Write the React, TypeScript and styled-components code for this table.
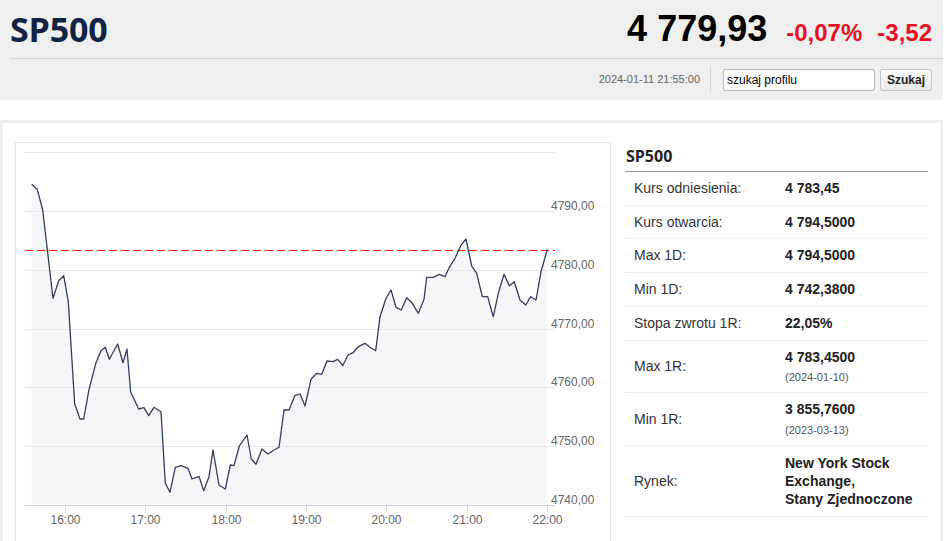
import styled, { createGlobalStyle } from "styled-components";

const GlobalStyle = createGlobalStyle`
  body {
    margin: 0;
    background: #fff;
    font-family: "Liberation Sans", Arial, sans-serif;
  }
`;

// chart points in page pixels (inner chart box starts at 16,143)
const points: [number, number][] = [
    [31.7, 184.3], [37.3, 189.3], [42.7, 210], [53, 298.3], [58.7, 280.7], [63.7, 275.7], [68.3, 301.7],
    [74.7, 404], [80, 419], [83.7, 419], [89, 389.3], [96, 362.7], [101, 350.7], [105.3, 347.3],
    [109.3, 359.3], [117.7, 344], [123, 362.7], [127, 349], [130.7, 392.3], [138.7, 409], [144, 407.7],
    [148.7, 415.7], [154, 407.3], [161, 411.7], [165.3, 483.3], [170, 492.3], [175.3, 467.3], [181, 465.7],
    [188, 468.3], [192, 479], [199, 476.3], [203.7, 490.7], [209, 476.7], [213, 450], [219, 485],
    [225.3, 489], [230.3, 465], [234, 465.7], [239.3, 446], [247, 435], [251.3, 459], [256, 464.3],
    [262, 449], [268, 454], [274, 450], [279, 447.3], [284, 410], [289, 410], [294.7, 395.7], [300, 394],
    [305, 406], [311, 379.3], [316.7, 373.3], [321.7, 374.3], [327, 361], [333, 361.7], [337.7, 359.3],
    [342.7, 365.7], [348, 355], [353, 352.7], [358.3, 346.7], [365, 343.3], [370, 347.3], [375.7, 350.7],
    [380, 316.7], [386, 298.3], [391, 290], [396, 307.3], [401.3, 310], [406.7, 297.7], [412.3, 303.3],
    [418.3, 313.3], [424, 299.3], [426.7, 277.3], [433.3, 277.3], [439.3, 274.3], [445, 276.7],
    [449.3, 267.3], [455, 258.3], [460.7, 245.7], [466, 239], [471.7, 266], [476.7, 273.3], [482.3, 296.7],
    [487.7, 296.7], [493.3, 316.7], [498.3, 293.3], [504, 274.3], [509.3, 285.7], [514.3, 281.7],
    [520, 300], [525.7, 305], [530.7, 296.7], [536, 300], [541, 271.7], [547.3, 249.3],
];

const axisY = 505.5;
// grid rows from 4800 down to 4740, snapped to half pixels for crisp 1px lines
const yLines = [4800, 4790, 4780, 4770, 4760, 4750, 4740].map((v, i) => ({
    v,
    y: Math.round(152.3 + i * 58.78) + 0.5,
}));
const hours = ["16:00", "17:00", "18:00", "19:00", "20:00", "21:00", "22:00"];
const refY = 250.5;

const stats = [
    { label: "Kurs odniesienia:", value: "4 783,45" },
    { label: "Kurs otwarcia:", value: "4 794,5000" },
    { label: "Max 1D:", value: "4 794,5000" },
    { label: "Min 1D:", value: "4 742,3800" },
    { label: "Stopa zwrotu 1R:", value: "22,05%" },
    { label: "Max 1R:", value: "4 783,4500", date: "(2024-01-10)" },
    { label: "Min 1R:", value: "3 855,7600", date: "(2023-03-13)" },
];

function Chart() {
    const line = points.map(([x, y], i) => `${i ? "L" : "M"}${x} ${y}`).join(" ");
    const first = points[0];
    const last = points[points.length - 1];
    const area = `${line} L${last[0]} ${axisY} L${first[0]} ${axisY} Z`;

    return (
        <ChartSvg viewBox="16 143 592 400" width={592} height={400}>
            <path d={area} fill="#f5f6f8" />
            {yLines.map((l) => (
                <g key={l.v}>
                    {l.v !== 4740 && <line x1={25} x2={555} y1={l.y} y2={l.y} stroke="#e6e6e6" />}
                    {l.v !== 4800 && (
                        <AxisText x={551} y={l.y - 1.5}>
                            {l.v},00
                        </AxisText>
                    )}
                </g>
            ))}
            <line x1={25} x2={555} y1={axisY} y2={axisY} stroke="#ccd6eb" />
            {hours.map((h, i) => {
                const x = Math.round(65 + i * 80.33) + 0.5;
                return (
                    <g key={h}>
                        <line x1={x} x2={x} y1={axisY} y2={axisY + 7} stroke="#ccd6eb" />
                        <AxisText x={x} y={524} textAnchor="middle">
                            {h}
                        </AxisText>
                    </g>
                );
            })}
            <line x1={25} x2={555} y1={refY} y2={refY} stroke="#ff1010" strokeDasharray="8 4" />
            <path d={line} fill="none" stroke="#2f3f5c" strokeWidth={1.3} strokeLinejoin="round" />
        </ChartSvg>
    );
}

export default function App() {
    return (
        <Page>
            <GlobalStyle />
            <Header>
                <TopRow>
                    <Title>SP500</Title>
                    <Quote>
                        <Price>4 779,93</Price>
                        <Change>-0,07%</Change>
                        <Change>-3,52</Change>
                    </Quote>
                </TopRow>
                <BottomRow>
                    <DateText>2024-01-11 21:55:00</DateText>
                    <SearchInput defaultValue="szukaj profilu" />
                    <SearchButton>Szukaj</SearchButton>
                </BottomRow>
            </Header>
            <Main>
                <ChartBox>
                    <Chart />
                </ChartBox>
                <Panel>
                    <PanelTitle>SP500</PanelTitle>
                    {stats.map((s) => (
                        <Row key={s.label}>
                            <Label>{s.label}</Label>
                            <Value>
                                {s.value}
                                {s.date && <SubDate>{s.date}</SubDate>}
                            </Value>
                        </Row>
                    ))}
                    <Row>
                        <Label>Rynek:</Label>
                        <Value $tall>
                            New York Stock
                            <br />
                            Exchange,
                            <br />
                            Stany Zjednoczone
                        </Value>
                    </Row>
                </Panel>
            </Main>
        </Page>
    );
}

const Page = styled.div`
width: 943px;
`;

const Header = styled.header`
background: #efefef;
`;

const TopRow = styled.div`
display: flex;
align-items: center;
justify-content: space-between;
height: 59px;
box-sizing: border-box;
margin-left: 10px;
padding-right: 11px;
border-bottom: 1px solid #d4d4d4;
`;

const Title = styled.h1`
margin: 0;
font-family: "Open Sans", sans-serif;
font-weight: 700;
font-size: 34px;
color: #0f2344;
letter-spacing: -0.2px;
`;

const Quote = styled.div`
display: flex;
align-items: baseline;
gap: 15px;
`;

const Price = styled.span`
font-size: 36px;
font-weight: 700;
color: #000;
margin-right: 4px;
`;

const Change = styled.span`
font-size: 24px;
font-weight: 700;
color: #e8101f;
`;

const BottomRow = styled.div`
display: flex;
align-items: center;
justify-content: flex-end;
height: 41px;
padding-right: 11px;
`;

const DateText = styled.span`
font-size: 11px;
color: #666;
line-height: 25px;
padding-right: 10px;
margin-right: 12px;
border-right: 1px solid #d0d0d0;
`;

const SearchInput = styled.input`
width: 152px;
height: 22px;
box-sizing: border-box;
border: 1px solid #b9b9b9;
border-radius: 2px;
padding: 0 3px;
margin: 0 5px 0 0;
font-family: "Liberation Sans", Arial, sans-serif;
font-size: 12px;
color: #000;
background: #fff;
`;

const SearchButton = styled.button`
width: 52px;
height: 22px;
box-sizing: border-box;
border: 1px solid #c6c6c6;
border-radius: 2px;
padding: 0;
background: linear-gradient(#fbfbfb, #e9e9e9);
font-family: "Liberation Sans", Arial, sans-serif;
font-size: 12px;
font-weight: 700;
color: #222;
`;

const Main = styled.main`
margin-top: 20px;
border: 3px solid #eeeeee;
padding: 19px 12px 0 12px;
display: flex;
align-items: flex-start;
gap: 14px;
min-height: 440px;
`;

const ChartBox = styled.div`
flex: none;
width: 594px;
border: 1px solid #e6e6e6;
`;

const ChartSvg = styled.svg`
display: block;
`;

const AxisText = styled.text`
font-family: "Liberation Sans", Arial, sans-serif;
font-size: 12px;
fill: #666;
`;

const Panel = styled.section`
flex: 1;
`;

const PanelTitle = styled.h2`
margin: 0;
padding: 3px 0 4px 1px;
line-height: 22px;
font-family: "Open Sans", sans-serif;
font-size: 16px;
font-weight: 700;
color: #222;
border-bottom: 1px solid #999;
`;

const Row = styled.div`
display: grid;
grid-template-columns: 160px 1fr;
align-items: center;
padding: 8px 0;
border-bottom: 1px solid #ececec;
font-size: 14px;
`;

const Label = styled.div`
padding-left: 9px;
color: #333;
line-height: 16.7px;
`;

const Value = styled.div<{ $tall?: boolean }>`
font-weight: 700;
color: #222;
line-height: ${(p) => (p.$tall ? "18px" : "16.7px")};
`;

const SubDate = styled.div`
font-size: 11px;
font-weight: 400;
color: #555;
line-height: 14px;
margin-top: 5px;
`;
